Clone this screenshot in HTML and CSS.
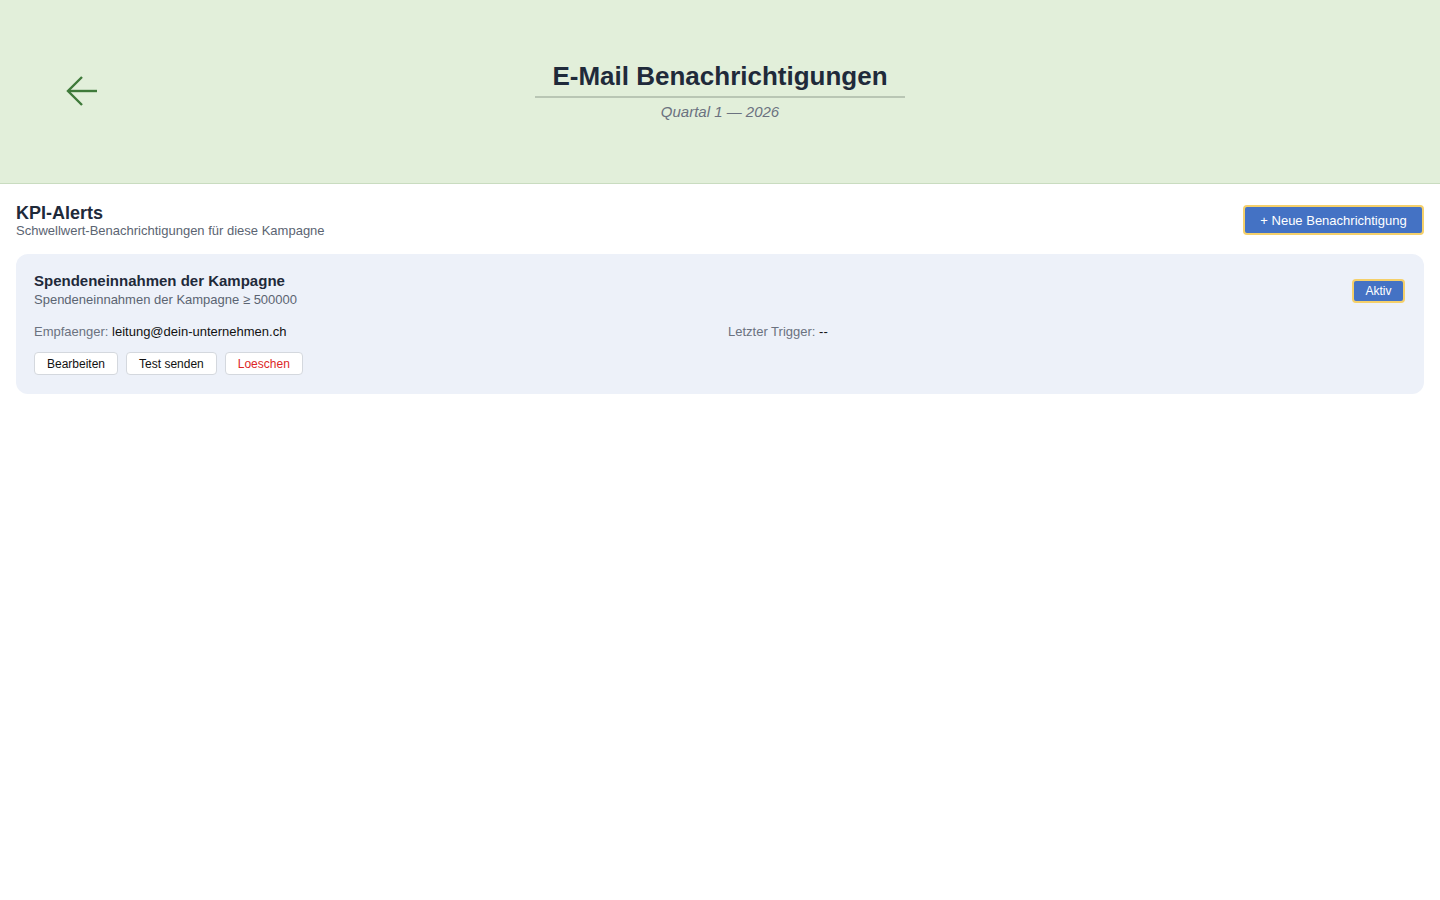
FILE: index.html
```html
<!DOCTYPE html>
<html lang="de">
<head>
    <meta charset="UTF-8">
    <title>E-Mail Benachrichtigungen</title>
    <link rel="stylesheet" href="styles.css">
</head>
<body>
    <div class="head">
        <a class="back" href="#">
            <svg width="34" height="34" viewBox="0 0 34 34" fill="none" stroke="#3f7a3a" stroke-width="2.4">
                <path d="M31 15H2"/>
                <path d="M16 1L2 15l14 14"/>
            </svg>
        </a>
        <div class="head_title">
            <h1>E-Mail Benachrichtigungen</h1>
            <div class="head_sub">Quartal 1 — 2026</div>
        </div>
    </div>
    <div class="main">
        <div class="top">
            <div>
                <h2>KPI-Alerts</h2>
                <div class="top_sub">Schwellwert-Benachrichtigungen für diese Kampagne</div>
            </div>
            <button class="btn_new">+ Neue Benachrichtigung</button>
        </div>
        <div class="card">
            <div class="card_head">
                <div>
                    <div class="card_title">Spendeneinnahmen der Kampagne</div>
                    <div class="card_sub">Spendeneinnahmen der Kampagne ≥ 500000</div>
                </div>
                <span class="badge">Aktiv</span>
            </div>
            <div class="card_info">
                <div><span class="lbl">Empfaenger:</span> leitung@dein-unternehmen.ch</div>
                <div><span class="lbl">Letzter Trigger:</span> --</div>
            </div>
            <div class="card_btns">
                <button class="btn">Bearbeiten</button>
                <button class="btn">Test senden</button>
                <button class="btn btn_del">Loeschen</button>
            </div>
        </div>
    </div>
</body>
</html>
```

FILE: styles.css
```css
*{
    margin: 0;
    padding: 0;
    box-sizing: border-box;
}
body{
    font-family: "Liberation Sans", Arial, sans-serif;
    color: #1f2937;
    background: #fff;
}
.head{
    height: 184px;
    background: #e2efda;
    border-bottom: 1px solid #c9dcc0;
    display: flex;
    align-items: center;
    justify-content: center;
    position: relative;
}
.back{
    position: absolute;
    left: 66px;
    top: 76px;
    display: block;
    width: 34px;
    height: 34px;
}
.head_title{
    text-align: center;
    margin-top: -3px;
}
.head_title h1{
    font-size: 26px;
    font-weight: bold;
    color: #1f2a3a;
    padding: 0 17px 4px;
    border-bottom: 2px solid #b9c6b4;
    line-height: 32px;
}
.head_sub{
    font-size: 15px;
    font-style: italic;
    color: #6b7280;
    margin-top: 5px;
}
.main{
    padding: 19px 16px;
}
.top{
    display: flex;
    justify-content: space-between;
    align-items: flex-start;
    margin-bottom: 15px;
}
.top h2{
    font-size: 18px;
    line-height: 20px;
    color: #1f2a3a;
}
.top_sub{
    font-size: 13px;
    color: #5b6472;
    line-height: 16px;
}
.btn_new{
    font-family: inherit;
    font-size: 13px;
    color: #fff;
    background: #4472c4;
    border: 2px solid #f5d06a;
    border-radius: 4px;
    width: 181px;
    height: 30px;
    margin-top: 2px;
    cursor: pointer;
}
.card{
    background: #edf1f9;
    border-radius: 12px;
    padding: 18px 18px 19px;
}
.card_head{
    display: flex;
    justify-content: space-between;
    align-items: center;
}
.card_title{
    font-size: 15px;
    font-weight: bold;
    color: #1f2a3a;
    line-height: 18px;
}
.card_sub{
    font-size: 13px;
    color: #5b6472;
    line-height: 16px;
    margin-top: 2px;
}
.badge{
    font-size: 12px;
    color: #fff;
    background: #4472c4;
    border: 2px solid #f5d06a;
    border-radius: 4px;
    width: 53px;
    height: 24px;
    line-height: 20px;
    text-align: center;
    margin-right: 1px;
    margin-top: 2px;
}
.card_info{
    display: grid;
    grid-template-columns: 1fr 1fr;
    gap: 16px;
    font-size: 13px;
    color: #111;
    margin-top: 16px;
    line-height: 16px;
}
.lbl{
    color: #6b7280;
}
.card_btns{
    display: flex;
    gap: 8px;
    margin-top: 12px;
}
.btn{
    font-family: inherit;
    font-size: 12px;
    color: #111;
    background: #fff;
    border: 1px solid #d4d8de;
    border-radius: 4px;
    height: 23px;
    padding: 0 12px;
    cursor: pointer;
}
.btn_del{
    color: #dc2626;
}
```
